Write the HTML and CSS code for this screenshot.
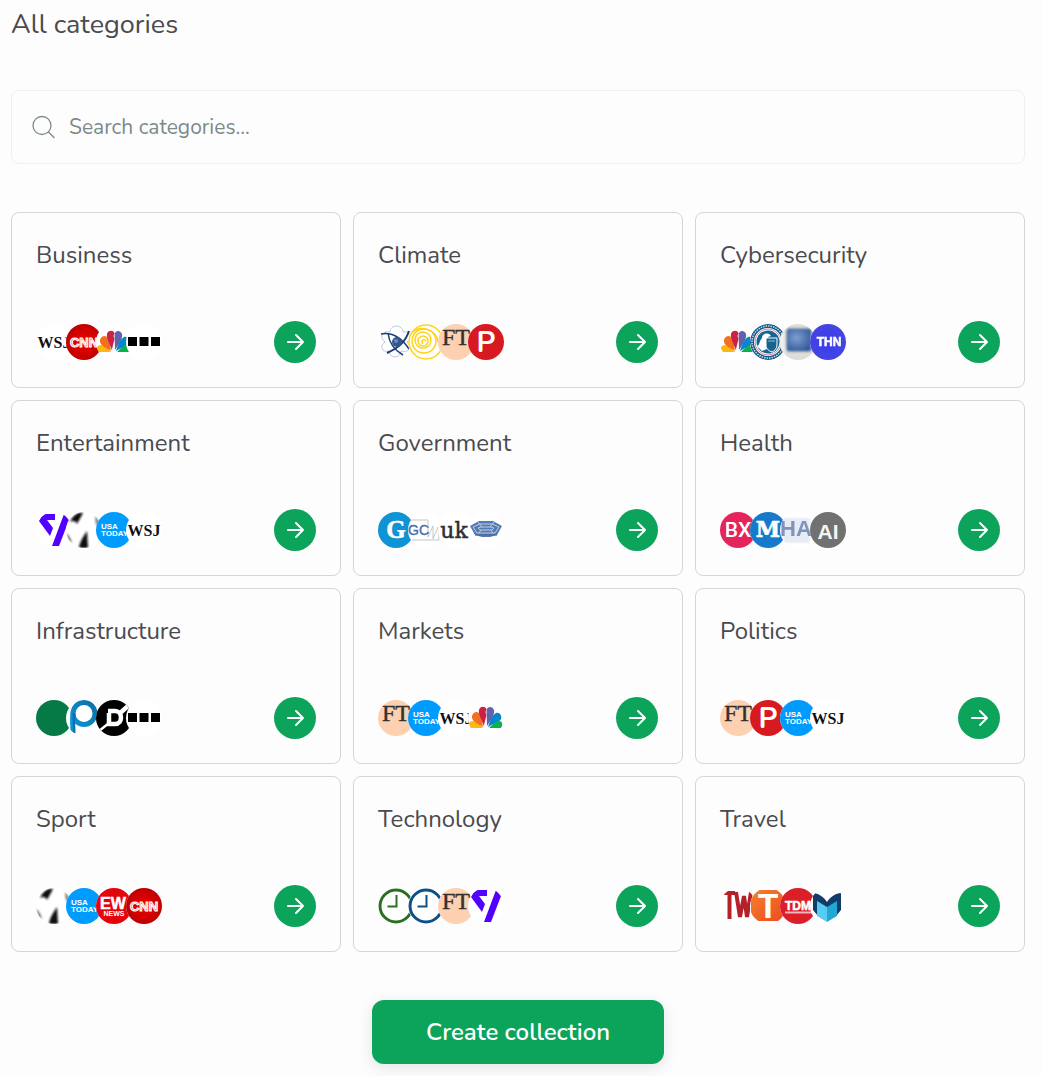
FILE: index.html
```html
<!DOCTYPE html>
<html lang="en">
<head>
<meta charset="utf-8">
<meta name="viewport" content="width=device-width, initial-scale=1">
<title>All categories</title>
<link rel="stylesheet" href="styles.css">
</head>
<body>
<svg class="sprite" width="0" height="0" aria-hidden="true">
  <defs>
    <radialGradient id="cnn-red"><stop offset="0.3" stop-color="#e60000"/><stop offset="1" stop-color="#bd0000"/></radialGradient>
    <radialGradient id="chip-blue" cx="0.4" cy="0.4" r="0.7"><stop offset="0" stop-color="#7ea0d2"/><stop offset="1" stop-color="#2f5694"/></radialGradient>
    <radialGradient id="thn-blue"><stop offset="0" stop-color="#3a3af0"/><stop offset="1" stop-color="#4545e2"/></radialGradient>
    <linearGradient id="p-blue" x1="0" y1="1" x2="1" y2="0"><stop offset="0" stop-color="#0b93d3"/><stop offset="1" stop-color="#0b70ab"/></linearGradient>
    <linearGradient id="orange" x1="0" y1="0" x2="1" y2="1"><stop offset="0" stop-color="#f5822a"/><stop offset="1" stop-color="#ee4a25"/></linearGradient>
    <filter id="soft"><feGaussianBlur stdDeviation="0.9"/></filter>
    <filter id="soft-sm"><feGaussianBlur stdDeviation="0.5"/></filter>

    <symbol id="wsj" viewBox="0 0 36 36"><text class="serif bold" x="18" y="24" font-size="16" fill="#111">WSJ</text></symbol>
    <symbol id="cnn" viewBox="0 0 36 36"><rect width="36" height="36" fill="url(#cnn-red)"/><text class="sans bold" x="18" y="23" font-size="13" fill="#e88" stroke="#fff" stroke-width="1">CNN</text></symbol>
    <symbol id="nbc" viewBox="0 0 36 36">
      <path fill="#fcb711" d="M15 28H1.500C0 24 1 21 5 21c3 0 6 3 10 7z"/>
      <path fill="#f37021" d="M15 27C10 24 3 21 4 16c1-4 5-5 7-3 3 2 3 8 4 14z"/>
      <path fill="#cc2045" d="M15.800 26C14 20 10 14 11 10c1-4 6-4 7.500-1l-1 3 1 3z"/>
      <path fill="#6460aa" d="M19 26l-.5-16c1-4 6-4 7.500 0 1 4-3 10-7 16z"/>
      <path fill="#0089d0" d="M20 27C22 21 24 15 28 13c4-1 6 3 5 6-1 3-7 4-13 8z"/>
      <path fill="#0db14b" d="M21 28C25 24 28 21 31 21c4 0 4 5 2 7z"/>
    </symbol>
    <symbol id="squares" viewBox="0 0 36 36"><path d="M2 13h9v9H2zM13.500 13h9v9h-9zM25 13h9v9h-9z"/></symbol>
    <symbol id="atom" viewBox="0 0 36 36">
      <path fill="none" stroke="#b9c7dd" d="M12 8c0-8 13-8 13 0 7-2 10 6 4 10 5 5 1 12-6 9-1 8-11 8-12 0-7 2-10-5-4-9-6-4-3-12 5-10z"/>
      <g fill="none" stroke="#1c3d77"><path stroke-width="1.500" d="M3 10c10-2 20 3 28 15"/><path stroke-width="2" d="M31 7c-4 12-11 17-22 22"/><path stroke-width="1.500" d="M10 9c1 9 6 17 15 22"/></g>
      <circle cx="19" cy="18" r="5" fill="#31558f"/><circle cx="18" cy="17" r="2" fill="#6c8cbc"/>
    </symbol>
    <symbol id="spiral" viewBox="0 0 36 36"><g fill="none" stroke="#ffd313" stroke-width="1.500"><circle cx="18" cy="18" r="17"/><circle cx="16" cy="17" r="12"/><circle cx="15" cy="16" r="8"/><circle cx="15" cy="17" r="5"/><path d="M15 20c-3-3 1-6 3-3M4 9c8-9 25-3 26 9"/></g></symbol>
    <symbol id="ft" viewBox="0 0 36 36"><rect width="36" height="36" fill="#fcd0b1"/><text class="serif" x="18" y="21" font-size="24" fill="#33302e" stroke="#33302e" stroke-width="0.400">FT</text></symbol>
    <symbol id="p-red" viewBox="0 0 36 36"><rect width="36" height="36" fill="#d71920"/><text class="rounded" x="18" y="28" font-size="29" fill="#fff">P</text></symbol>
    <symbol id="cisa" viewBox="0 0 36 36">
      <rect width="36" height="36" fill="#fff"/><circle cx="18" cy="18" r="16" fill="none" stroke="#12598a" stroke-width="4"/><circle cx="18" cy="18" r="16" fill="none" stroke="#c8dce8" stroke-width="1.500" stroke-dasharray="1.500 1"/>
      <circle cx="18" cy="18" r="13" fill="none" stroke="#c96a74" stroke-width="0.800"/><circle cx="18" cy="18" r="11.500" fill="#12659a"/>
      <path fill="#fff" d="M12 14c0-5 7-6 9-2l-3 1-1 12-5 2-5-5c3-1 2-5 5-8z"/><path fill="#16658f" stroke="#fff" d="M16 14h11v7c0 4-3 6-5 7-3-1-6-3-6-7z"/><path stroke="#8ab9ce" d="M18 17h7"/>
    </symbol>
    <symbol id="chip" viewBox="0 0 36 36"><rect width="36" height="36" fill="#dfddd8"/><g filter="url(#soft)"><rect width="4" height="36" y="0" fill="#f3f2ee"/><rect x="7" y="5" width="24" height="22" rx="2" fill="url(#chip-blue)" stroke="#456fa5"/></g></symbol>
    <symbol id="thn" viewBox="0 0 36 36"><rect width="36" height="36" fill="url(#thn-blue)"/><text class="sans bold" x="19" y="22" font-size="12" fill="#fff" stroke="#fff" stroke-width="0.500" filter="url(#soft-sm)">THN</text></symbol>
    <symbol id="verge" viewBox="0 0 36 36"><path fill="#5200ff" d="M7 2h12v6h-8l6 8-3 8L3 9zM28 2l5 6-10 26h-7z"/></symbol>
    <symbol id="ball" viewBox="0 0 36 36"><g filter="url(#soft)"><path fill="#111" d="M4 10C7 3 13-1 17 1c-2 4-4 7-6 11-1-3-4-4-7-2zM21 19l1 17h-9c1-7 4-11 8-17z"/><path fill="#777" d="M29 4c4 3 5 8 4 10l-3-2zM0 21c2 1 5 5 6 10l-4-2z"/></g></symbol>
    <symbol id="usa" viewBox="0 0 36 36"><rect width="36" height="36" fill="#009bff"/><text class="sans bold start" x="5" y="17" font-size="8" fill="#fff">USA</text><text class="sans bold start" x="5" y="24" font-size="8" fill="#fff">TODAY</text></symbol>
    <symbol id="g-blue" viewBox="0 0 36 36"><rect width="36" height="36" fill="#0e94d4"/><text class="serif bold" x="18" y="26" font-size="25" fill="#fff" stroke="#fff" stroke-width="0.500">G</text></symbol>
    <symbol id="gcn" viewBox="0 0 36 36"><path fill="none" stroke="#c4c6cb" d="M0 8h20v17l5-11v13l5-12 1 13H4"/><text class="sans start" x="0" y="23" font-size="14" fill="#456fb4" stroke="#456fb4" stroke-width="0.400">GC</text></symbol>
    <symbol id="uk" viewBox="0 0 36 36"><text class="slab" x="16" y="26" font-size="22" fill="#2d2f33" stroke="#2d2f33" stroke-width="0.500">uk</text></symbol>
    <symbol id="pentagon" viewBox="0 0 36 36"><path fill="#5479b3" d="M2 14l9-5h14l9 5-5 9-7 2h-8l-7-2z"/><path fill="none" stroke="#bfcee4" d="M5 15l7-3h12l7 3-4 6H9zM10 16l3-1h10l3 1-2 2H12zM10 10l4 5M26 10l-4 5M11 21l2-3M25 21l-2-3"/><path stroke="#44699f" d="M7 23h22"/></symbol>
    <symbol id="bx" viewBox="0 0 36 36"><rect width="36" height="36" fill="#e5245b"/><text class="roboto strong" x="18" y="25" font-size="21" fill="#fff">BX</text></symbol>
    <symbol id="m-blue" viewBox="0 0 36 36"><rect width="36" height="36" fill="#1679cc"/><text class="slab bold" x="18" y="25" font-size="22" fill="#fff" stroke="#fff" stroke-width="0.600">M</text></symbol>
    <symbol id="ha" viewBox="0 0 36 36"><g filter="url(#soft)"><path fill="#e6ebf4" d="M0 6h30v25H4z"/></g><text class="sans bold" x="16" y="24" font-size="22" fill="#7f93bd" filter="url(#soft-sm)">HA</text></symbol>
    <symbol id="ai" viewBox="0 0 36 36"><rect width="36" height="36" fill="#717171"/><text class="sans bold" x="18" y="27" font-size="21" fill="#f4f4f4">AI</text></symbol>
    <symbol id="green" viewBox="0 0 36 36"><rect width="36" height="36" fill="#067a46"/></symbol>
    <symbol id="p-ring" viewBox="0 0 36 36"><g fill="none" stroke="url(#p-blue)" stroke-width="5"><circle cx="18" cy="13.500" r="11"/><path d="M7 13c-1 7 0 13 0 20" /></g></symbol>
    <symbol id="d-black" viewBox="0 0 36 36"><rect width="36" height="36"/><path fill="none" stroke="#fff" stroke-width="4.500" d="M12 11h7c8 0 8 13 0 13h-6V13M23 14l9-8"/><path fill="none" stroke="#fff" stroke-width="2.500" d="M3 31l10-8"/></symbol>
    <symbol id="ew" viewBox="0 0 36 36"><rect width="36" height="36" fill="#e4040c"/><text class="sans bold" x="17" y="21" font-size="16" fill="#fff" stroke="#fff" stroke-width="0.500">EW</text><text class="sans bold" x="18" y="28" font-size="7" fill="#fff">NEWS</text></symbol>
    <symbol id="clock" viewBox="0 0 36 36"><g fill="none" stroke="currentColor" stroke-width="3"><circle cx="18" cy="18" r="16"/><path stroke-width="2" d="M18.500 7v11.500H9.500"/></g></symbol>
    <symbol id="tw" viewBox="0 0 36 36"><g filter="url(#soft-sm)" stroke="#b3202a" fill="none"><path stroke-width="4" d="M4 5h11M9.500 5v26"/><path stroke-width="4" d="M16 4l4 25 4-21 3 21 4-25"/></g></symbol>
    <symbol id="t-orange" viewBox="0 0 36 36"><path fill="url(#orange)" d="M8 2h20l6 7v24H8l-7-6V9z"/><text class="roboto bold" x="18" y="30" font-size="34" fill="#fff">T</text></symbol>
    <symbol id="tdm" viewBox="0 0 36 36"><rect width="36" height="36" fill="#db1f28"/><text class="sans bold" x="18" y="22" font-size="12" fill="#fff" stroke="#fff" stroke-width="0.500">TDM</text><path fill="#f5b5b8" d="M5 23.500h27v2H5z"/></symbol>
    <symbol id="book" viewBox="0 0 36 36"><path fill="#123c69" d="M3 5c5 0 11 4 14 9 3-5 9-9 14-9v17l-5 6V14l-9 7-9-7v14l-5-6z"/><path fill="#56ccf2" d="M7 13l10 6v15L7 28z"/><path fill="#22a7d5" d="M27 13l-10 6v15l10-6z"/></symbol>

    <symbol id="arrow" viewBox="0 0 24 24"><path fill="none" stroke="#fff" stroke-width="2" stroke-linecap="round" stroke-linejoin="round" d="M5 12h15M13 5l7 7-7 7"/></symbol>
  </defs>
</svg>

<main class="page">
  <h1 class="page-title">All categories</h1>

  <label class="search">
    <svg class="search-icon" viewBox="0 0 24 24" aria-hidden="true"><circle cx="10" cy="10.500" r="9"/><path d="M16.500 17l5.500 5.500"/></svg>
    <input class="search-input" type="search" placeholder="Search categories..." aria-label="Search categories">
  </label>

  <section class="grid" aria-label="Categories">
    <article class="card"><h2 class="card-title">Business</h2><div class="card-foot"><div class="logos"><svg class="logo"><use href="#wsj"/></svg><svg class="logo"><use href="#cnn"/></svg><svg class="logo"><use href="#nbc"/></svg><svg class="logo"><use href="#squares"/></svg></div><a class="go" href="#business" aria-label="Open Business"><svg class="go-icon"><use href="#arrow"/></svg></a></div></article>
    <article class="card"><h2 class="card-title">Climate</h2><div class="card-foot"><div class="logos"><svg class="logo"><use href="#atom"/></svg><svg class="logo"><use href="#spiral"/></svg><svg class="logo"><use href="#ft"/></svg><svg class="logo"><use href="#p-red"/></svg></div><a class="go" href="#climate" aria-label="Open Climate"><svg class="go-icon"><use href="#arrow"/></svg></a></div></article>
    <article class="card"><h2 class="card-title">Cybersecurity</h2><div class="card-foot"><div class="logos"><svg class="logo"><use href="#nbc"/></svg><svg class="logo"><use href="#cisa"/></svg><svg class="logo"><use href="#chip"/></svg><svg class="logo"><use href="#thn"/></svg></div><a class="go" href="#cybersecurity" aria-label="Open Cybersecurity"><svg class="go-icon"><use href="#arrow"/></svg></a></div></article>
    <article class="card"><h2 class="card-title">Entertainment</h2><div class="card-foot"><div class="logos"><svg class="logo"><use href="#verge"/></svg><svg class="logo"><use href="#ball"/></svg><svg class="logo"><use href="#usa"/></svg><svg class="logo"><use href="#wsj"/></svg></div><a class="go" href="#entertainment" aria-label="Open Entertainment"><svg class="go-icon"><use href="#arrow"/></svg></a></div></article>
    <article class="card"><h2 class="card-title">Government</h2><div class="card-foot"><div class="logos"><svg class="logo"><use href="#g-blue"/></svg><svg class="logo"><use href="#gcn"/></svg><svg class="logo"><use href="#uk"/></svg><svg class="logo"><use href="#pentagon"/></svg></div><a class="go" href="#government" aria-label="Open Government"><svg class="go-icon"><use href="#arrow"/></svg></a></div></article>
    <article class="card"><h2 class="card-title">Health</h2><div class="card-foot"><div class="logos"><svg class="logo"><use href="#bx"/></svg><svg class="logo"><use href="#m-blue"/></svg><svg class="logo"><use href="#ha"/></svg><svg class="logo"><use href="#ai"/></svg></div><a class="go" href="#health" aria-label="Open Health"><svg class="go-icon"><use href="#arrow"/></svg></a></div></article>
    <article class="card"><h2 class="card-title">Infrastructure</h2><div class="card-foot"><div class="logos"><svg class="logo"><use href="#green"/></svg><svg class="logo"><use href="#p-ring"/></svg><svg class="logo"><use href="#d-black"/></svg><svg class="logo"><use href="#squares"/></svg></div><a class="go" href="#infrastructure" aria-label="Open Infrastructure"><svg class="go-icon"><use href="#arrow"/></svg></a></div></article>
    <article class="card"><h2 class="card-title">Markets</h2><div class="card-foot"><div class="logos"><svg class="logo"><use href="#ft"/></svg><svg class="logo"><use href="#usa"/></svg><svg class="logo"><use href="#wsj"/></svg><svg class="logo"><use href="#nbc"/></svg></div><a class="go" href="#markets" aria-label="Open Markets"><svg class="go-icon"><use href="#arrow"/></svg></a></div></article>
    <article class="card"><h2 class="card-title">Politics</h2><div class="card-foot"><div class="logos"><svg class="logo"><use href="#ft"/></svg><svg class="logo"><use href="#p-red"/></svg><svg class="logo"><use href="#usa"/></svg><svg class="logo"><use href="#wsj"/></svg></div><a class="go" href="#politics" aria-label="Open Politics"><svg class="go-icon"><use href="#arrow"/></svg></a></div></article>
    <article class="card"><h2 class="card-title">Sport</h2><div class="card-foot"><div class="logos"><svg class="logo"><use href="#ball"/></svg><svg class="logo"><use href="#usa"/></svg><svg class="logo"><use href="#ew"/></svg><svg class="logo"><use href="#cnn"/></svg></div><a class="go" href="#sport" aria-label="Open Sport"><svg class="go-icon"><use href="#arrow"/></svg></a></div></article>
    <article class="card"><h2 class="card-title">Technology</h2><div class="card-foot"><div class="logos"><svg class="logo clock-green"><use href="#clock"/></svg><svg class="logo clock-blue"><use href="#clock"/></svg><svg class="logo"><use href="#ft"/></svg><svg class="logo"><use href="#verge"/></svg></div><a class="go" href="#technology" aria-label="Open Technology"><svg class="go-icon"><use href="#arrow"/></svg></a></div></article>
    <article class="card"><h2 class="card-title">Travel</h2><div class="card-foot"><div class="logos"><svg class="logo"><use href="#tw"/></svg><svg class="logo"><use href="#t-orange"/></svg><svg class="logo"><use href="#tdm"/></svg><svg class="logo"><use href="#book"/></svg></div><a class="go" href="#travel" aria-label="Open Travel"><svg class="go-icon"><use href="#arrow"/></svg></a></div></article>
  </section>

  <button class="create" type="button">Create collection</button>
</main>
</body>
</html>
```
FILE: styles.css
```css
* { box-sizing: border-box; }

body {
  margin: 0;
  background: #fdfdfd;
  color: #4a4a4f;
  font-family: Nunito, "Open Sans", sans-serif;
}

.sprite { position: absolute; }

.page {
  display: flex;
  flex-direction: column;
  padding: 7px 17px 12px 11px;
}

.page-title {
  margin: 0 0 47px;
  font-size: 27px;
  line-height: 36px;
  font-weight: 400;
}

.search {
  display: flex;
  align-items: center;
  gap: 13px;
  height: 74px;
  margin-bottom: 48px;
  padding: 0 20px;
  border: 1px solid #eeefef;
  border-radius: 8px;
}

.search-icon {
  flex: none;
  width: 24px;
  height: 24px;
  fill: none;
  stroke: #7b8a8b;
  stroke-width: 1.3;
  stroke-linecap: round;
}

.search-input {
  flex: 1;
  min-width: 0;
  padding: 0;
  border: 0;
  outline: 0;
  background: transparent;
  color: #4a4a4f;
  font: inherit;
  font-size: 21px;
  line-height: 28px;
}

.search-input::placeholder { color: #7b8a8b; opacity: 1; }

.grid {
  display: grid;
  grid-template-columns: repeat(3, minmax(0, 1fr));
  gap: 12px;
  margin-bottom: 48px;
}

.card {
  display: flex;
  flex-direction: column;
  gap: 48px;
  padding: 24px;
  border: 1px solid #d2d7d7;
  border-radius: 8px;
}

.card-title {
  margin: 0;
  font-size: 24px;
  line-height: 36px;
  font-weight: 400;
}

.card-foot {
  display: flex;
  align-items: center;
  justify-content: space-between;
}

.logos { display: flex; }

.logo {
  width: 36px;
  height: 36px;
  border-radius: 50%;
  background: #fff;
  overflow: hidden;
}

.logo + .logo { margin-left: -6px; }

.clock-green { color: #2a7020; }
.clock-blue { color: #0b5089; }

.go {
  display: flex;
  align-items: center;
  justify-content: center;
  width: 42px;
  height: 42px;
  border-radius: 50%;
  background: #0ca35b;
}

.go-icon { width: 24px; height: 24px; }

.create {
  align-self: center;
  width: 292px;
  height: 64px;
  border: 0;
  border-radius: 12px;
  background: #0ca35b;
  box-shadow: 0 4px 16px rgba(0, 0, 0, 0.1);
  color: #fff;
  font: inherit;
  font-size: 24px;
  font-weight: 600;
  line-height: 36px;
}

text { text-anchor: middle; }
.start { text-anchor: start; }
.serif { font-family: "Liberation Serif", serif; }
.slab { font-family: "DejaVu Serif", serif; }
.sans { font-family: "Liberation Sans", sans-serif; }
.roboto { font-family: Roboto, sans-serif; }
.rounded { font-family: Nunito, sans-serif; font-weight: 700; }
.strong { font-weight: 500; }
.bold { font-weight: 700; }
```
